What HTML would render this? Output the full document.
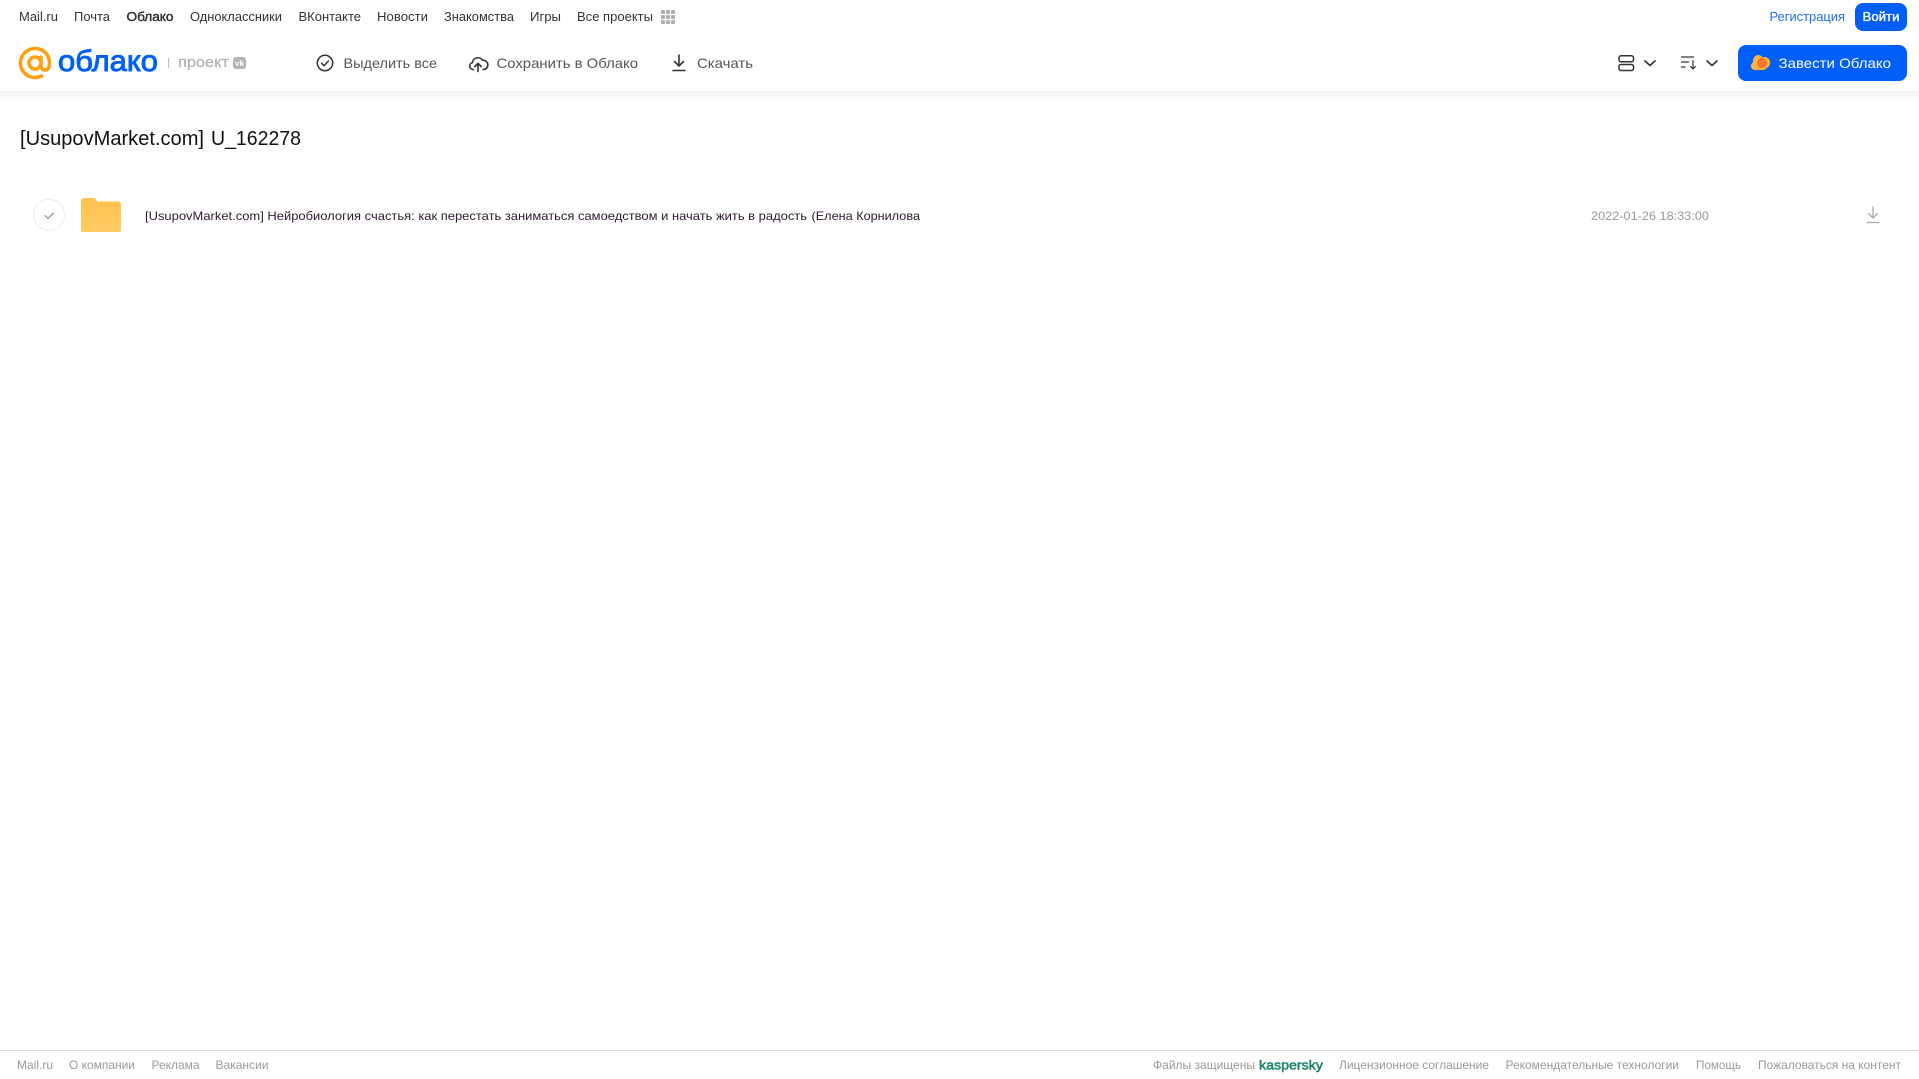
<!DOCTYPE html>
<html lang="ru"><head><meta charset="utf-8"><title>Облако</title>
<style>
html,body{margin:0;padding:0;background:#fff;width:1919px;height:1079px;overflow:hidden}
svg{display:block;position:absolute;left:0;top:0}
text{font-family:"Liberation Sans",sans-serif}
.n{font-size:12.5px;fill:#333}
.t{font-size:14px;fill:#555}
.f{font-size:12px;fill:#999}
</style></head><body>
<svg width="1919" height="1079" viewBox="0 0 1919 1079" xmlns="http://www.w3.org/2000/svg">
<defs><linearGradient id="s" x1="0" y1="0" x2="0" y2="1"><stop offset="0" stop-color="#f3f3f3"/><stop offset="1" stop-color="#fff"/></linearGradient>
<linearGradient id="fo" x1="0" y1="0" x2="0" y2="1"><stop offset="0" stop-color="#ffc24f"/><stop offset="1" stop-color="#ffcb63"/></linearGradient></defs>
<rect x="0" y="91" width="1919" height="10" fill="url(#s)"/>

<text class="n" x="19" y="21" textLength="39" lengthAdjust="spacingAndGlyphs">Mail.ru</text>
<text class="n" x="74" y="21" textLength="36" lengthAdjust="spacingAndGlyphs">Почта</text>
<text class="n" x="126.500" y="21" textLength="47" lengthAdjust="spacingAndGlyphs" style="stroke:#333;stroke-width:.45">Облако</text>
<text class="n" x="190" y="21" textLength="92" lengthAdjust="spacingAndGlyphs">Одноклассники</text>
<text class="n" x="298.500" y="21" textLength="62.500" lengthAdjust="spacingAndGlyphs">ВКонтакте</text>
<text class="n" x="377" y="21" textLength="51" lengthAdjust="spacingAndGlyphs">Новости</text>
<text class="n" x="444" y="21" textLength="70" lengthAdjust="spacingAndGlyphs">Знакомства</text>
<text class="n" x="530" y="21" textLength="31" lengthAdjust="spacingAndGlyphs">Игры</text>
<text class="n" x="577" y="21" textLength="76" lengthAdjust="spacingAndGlyphs">Все проекты</text>
<g fill="#b0b0b0"><rect x="661" y="10" width="4" height="4" rx="1"/><rect x="666" y="10" width="4" height="4" rx="1"/><rect x="671" y="10" width="4" height="4" rx="1"/><rect x="661" y="15" width="4" height="4" rx="1"/><rect x="666" y="15" width="4" height="4" rx="1"/><rect x="671" y="15" width="4" height="4" rx="1"/><rect x="661" y="20" width="4" height="4" rx="1"/><rect x="666" y="20" width="4" height="4" rx="1"/><rect x="671" y="20" width="4" height="4" rx="1"/></g>

<text class="n" x="1769.500" y="21" textLength="75.500" lengthAdjust="spacingAndGlyphs" style="fill:#1a6ff5">Регистрация</text>
<rect x="1855" y="3" width="52" height="28" rx="8" fill="#005ff9"/>
<text class="n" x="1862.500" y="21" textLength="37" lengthAdjust="spacingAndGlyphs" style="fill:#fff;stroke:#fff;stroke-width:.35">Войти</text>

<g fill="none" stroke="#ffa110" stroke-width="3.600"><circle cx="35" cy="63" r="6"/><path d="M41 57v8.500c0 3 2 4.500 4 4.500 3.500 0 4.500-3.500 4.500-7 0-8.500-6.500-14.500-14.500-14.500S20.500 55 20.500 63 27 77.500 35 77.500c2.500 0 4.500-.5 6.500-1.500" stroke-linecap="round"/></g>
<text x="58" y="71" font-size="30" textLength="100" lengthAdjust="spacingAndGlyphs" fill="#005ff9" stroke="#005ff9" stroke-width=".9">облако</text>
<rect x="168" y="58" width="1" height="10" fill="#bbb"/>
<text x="178" y="67" font-size="15" textLength="51" lengthAdjust="spacingAndGlyphs" fill="#b3b3b3" stroke="#b3b3b3" stroke-width=".3">проект</text>
<rect x="233" y="57" width="13" height="12" rx="3" fill="#b3b3b3"/>
<text x="235" y="66" font-size="8" font-weight="700" textLength="9" lengthAdjust="spacingAndGlyphs" fill="#fff">vk</text>

<circle cx="325" cy="63" r="7.700" fill="none" stroke="#333" stroke-width="1.500"/>
<path d="M321.500 63.200l2.500 2.500 4.500-4.700" fill="none" stroke="#333" stroke-width="1.500" stroke-linecap="round" stroke-linejoin="round"/>
<text class="t" x="343.500" y="68" textLength="93.500" lengthAdjust="spacingAndGlyphs">Выделить все</text>

<path d="M473.500 69.500h-.6a3.500 3.500 0 0 1-.5-6.900 5.500 5.500 0 0 1 10.100-2.300 4.600 4.600 0 0 1 1.400 9.200h-.9M478 71.500V63.500M474.800 66.500l3.200-3.200 3.200 3.200" fill="none" stroke="#333" stroke-width="1.600" stroke-linecap="round" stroke-linejoin="round"/>
<text class="t" x="496.500" y="68" textLength="141.500" lengthAdjust="spacingAndGlyphs">Сохранить в Облако</text>

<path d="M679 55v11M674.500 61.500l4.500 4.500 4.500-4.500M673 70.500h12" fill="none" stroke="#333" stroke-width="1.600" stroke-linecap="round" stroke-linejoin="round"/>
<text class="t" x="697" y="68" textLength="56" lengthAdjust="spacingAndGlyphs">Скачать</text>

<g fill="none" stroke="#333" stroke-width="1.500"><rect x="1619" y="55.800" width="14.500" height="6" rx="2"/><rect x="1619" y="64.500" width="14.500" height="6" rx="2"/></g>
<path d="M1645 61l5 4.500 5-4.500" fill="none" stroke="#333" stroke-width="1.700" stroke-linecap="round" stroke-linejoin="round"/>
<path d="M1681.500 57h12M1681.500 62h7M1681.500 67h3.500M1693 60.500v8.500M1690.500 66.500l2.500 2.500 2.500-2.500" fill="none" stroke="#333" stroke-width="1.200" stroke-linecap="round" stroke-linejoin="round"/>
<path d="M1707 61l5 4.500 5-4.500" fill="none" stroke="#333" stroke-width="1.700" stroke-linecap="round" stroke-linejoin="round"/>

<rect x="1738" y="45" width="169" height="36" rx="8" fill="#005ff9"/>
<path d="M1755 70a4 4 0 0 1-1.800-7.600 5.800 5.800 0 0 1 5-7.400c2 0 3.500 1 4.500 2.400a5.500 5.500 0 0 1 3.800 10.600c-.7 1.300-2 2-3.500 2z" fill="#ffb23f"/>
<circle cx="1762" cy="63" r="5" fill="#f5762a"/>
<text x="1778.500" y="68" font-size="14" textLength="112.500" lengthAdjust="spacingAndGlyphs" fill="#fff">Завести Облако</text>

<text x="20" y="145" font-size="20" textLength="184" lengthAdjust="spacingAndGlyphs" fill="#111">[UsupovMarket.com]</text>
<text x="211" y="145" font-size="20" textLength="90" lengthAdjust="spacingAndGlyphs" fill="#111">U_162278</text>

<circle cx="49" cy="215" r="15.500" fill="#fff" stroke="#ececec" stroke-width="1"/>
<path d="M45 215.500l3 3 5.500-5.500" fill="none" stroke="#999" stroke-width="1.300" stroke-linecap="round" stroke-linejoin="round"/>
<path d="M81 201a3 3 0 0 1 3-3h8.500c2 0 3 .8 4 2l1 1.500h20.500a3 3 0 0 1 3 3V230a2 2 0 0 1-2 2H83a2 2 0 0 1-2-2z" fill="url(#fo)"/>
<rect x="81" y="205" width="40" height="1" fill="#ffb93d" opacity=".5"/>
<text x="145" y="220" font-size="12" textLength="662" lengthAdjust="spacingAndGlyphs" fill="#2c1a2e">[UsupovMarket.com] Нейробиология счастья: как перестать заниматься самоедством и начать жить в радость</text>
<text x="811.500" y="220" font-size="12" textLength="108.500" lengthAdjust="spacingAndGlyphs" fill="#2c1a2e">(Елена Корнилова</text>
<text x="1591" y="220" font-size="12" textLength="118" lengthAdjust="spacingAndGlyphs" fill="#999">2022-01-26 18:33:00</text>
<path d="M1873 207v11M1868.500 213.500l4.500 4.500 4.500-4.500M1867 222.500h12" fill="none" stroke="#aaa" stroke-width="1.300" stroke-linecap="round" stroke-linejoin="round"/>

<rect x="0" y="1050" width="1919" height="1" fill="#d9d9d9"/>
<text class="f" x="17" y="1069" textLength="36" lengthAdjust="spacingAndGlyphs">Mail.ru</text>
<text class="f" x="69" y="1069" textLength="66" lengthAdjust="spacingAndGlyphs">О компании</text>
<text class="f" x="151.500" y="1069" textLength="48" lengthAdjust="spacingAndGlyphs">Реклама</text>
<text class="f" x="215.500" y="1069" textLength="53" lengthAdjust="spacingAndGlyphs">Вакансии</text>
<text class="f" x="1153" y="1069" textLength="102" lengthAdjust="spacingAndGlyphs">Файлы защищены</text>
<text x="1259" y="1069.500" font-size="13" textLength="64" lengthAdjust="spacingAndGlyphs" fill="#1a7f6b" stroke="#1a7f6b" stroke-width=".5">kaspersky</text>
<text class="f" x="1339" y="1069" textLength="150" lengthAdjust="spacingAndGlyphs">Лицензионное соглашение</text>
<text class="f" x="1505.500" y="1069" textLength="173.500" lengthAdjust="spacingAndGlyphs">Рекомендательные технологии</text>
<text class="f" x="1696" y="1069" textLength="45" lengthAdjust="spacingAndGlyphs">Помощь</text>
<text class="f" x="1758" y="1069" textLength="143" lengthAdjust="spacingAndGlyphs">Пожаловаться на контент</text>
</svg>
</body></html>
